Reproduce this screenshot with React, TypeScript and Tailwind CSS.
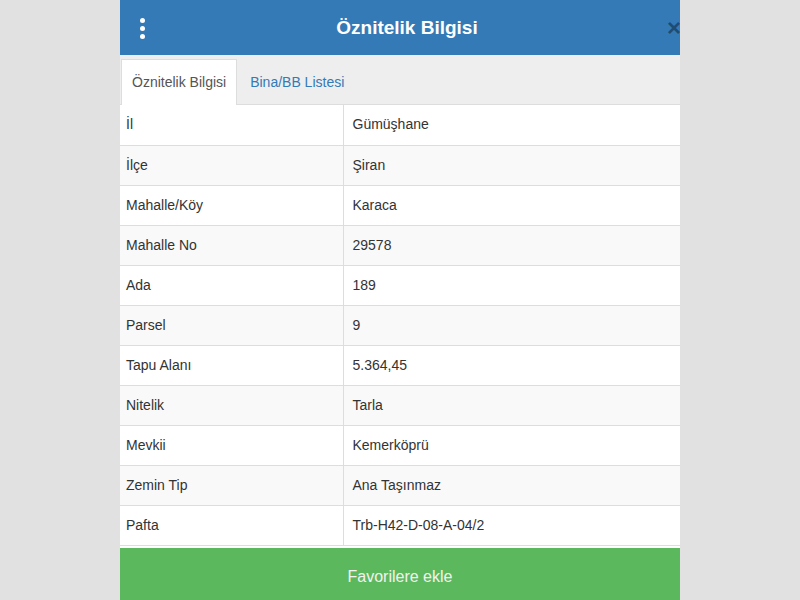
import { useState } from 'react';

const ROWS: [string, string][] = [
  ['İl', 'Gümüşhane'],
  ['İlçe', 'Şiran'],
  ['Mahalle/Köy', 'Karaca'],
  ['Mahalle No', '29578'],
  ['Ada', '189'],
  ['Parsel', '9'],
  ['Tapu Alanı', '5.364,45'],
  ['Nitelik', 'Tarla'],
  ['Mevkii', 'Kemerköprü'],
  ['Zemin Tip', 'Ana Taşınmaz'],
  ['Pafta', 'Trb-H42-D-08-A-04/2'],
];

export default function App() {
  const [tab, setTab] = useState(0);

  return (
    <div className="w-[800px] h-[600px] bg-[#e1e1e1] flex justify-center overflow-hidden font-['Liberation_Sans',Arial,sans-serif] text-[14px] text-[#333]">
      <div className="w-[560px] h-full bg-white flex flex-col overflow-hidden">
        {/* Header */}
        <div className="relative h-[55px] shrink-0 bg-[#337ab7] flex items-center justify-center">
          <button className="absolute left-[18px] top-[16px] flex flex-col gap-[3px] p-[2px]" aria-label="Menu">
            <span className="w-[5px] h-[5px] rounded-full bg-white" />
            <span className="w-[5px] h-[5px] rounded-full bg-white" />
            <span className="w-[5px] h-[5px] rounded-full bg-white" />
          </button>
          <h1 className="pl-[14px] text-[19px] font-bold text-white leading-none">Öznitelik Bilgisi</h1>
          <span className="absolute left-[547px] top-[16px] text-[24px] font-bold text-black/40 leading-none">×</span>
        </div>

        {/* Tabs */}
        <div className="h-[50px] shrink-0 bg-[#eeeeee] flex items-end pl-px border-b border-[#dddddd]">
          <button
            onClick={() => setTab(0)}
            className={`h-[46px] px-[10px] -mb-px border border-b-0 ${tab === 0 ? 'bg-white border-[#dddddd] text-[#555]' : 'border-transparent text-[#337ab7]'}`}
          >
            Öznitelik Bilgisi
          </button>
          <button
            onClick={() => setTab(1)}
            className={`h-[46px] px-[12px] -mb-px border border-b-0 ${tab === 1 ? 'bg-white border-[#dddddd] text-[#555]' : 'border-transparent text-[#337ab7]'}`}
          >
            Bina/BB Listesi
          </button>
        </div>

        {/* Table */}
        <table className="w-full border-collapse shrink-0">
          <tbody>
            {ROWS.map(([k, v], i) => (
              <tr key={k} className={i % 2 === 1 ? 'bg-[#f9f9f9]' : 'bg-white'}>
                <td className="w-[223px] h-[40px] px-[6px] border-b border-r border-[#dddddd] align-middle">{k}</td>
                <td className="h-[40px] px-[9px] border-b border-[#dddddd] align-middle">{v}</td>
              </tr>
            ))}
          </tbody>
        </table>

        <div className="h-[2px] shrink-0 bg-white" />
        <button className="flex-1 bg-[#5cb85c] text-[#f2f2f2] text-[16px] pt-[6px]">Favorilere ekle</button>
      </div>
    </div>
  );
}
